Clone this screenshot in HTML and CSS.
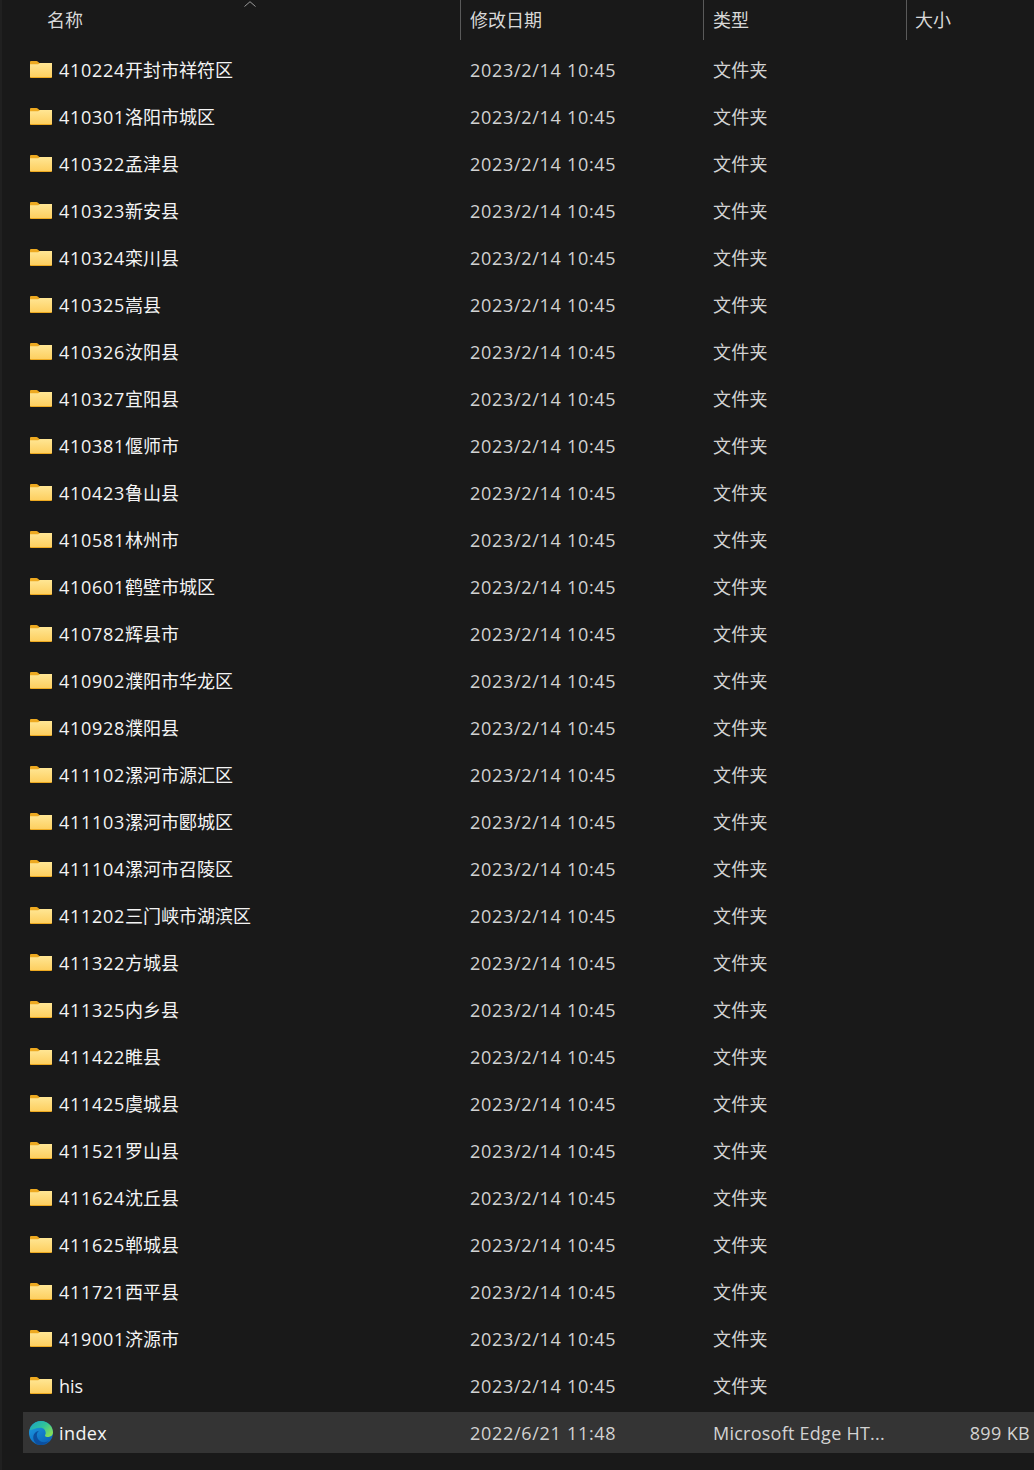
FILE: index.html
```html
<!DOCTYPE html>
<html lang="zh-CN">
<head>
  <meta charset="UTF-8">
  <title>文件列表</title>
  <link rel="stylesheet" href="styles.css">
</head>
<body>
  <svg class="defs" width="0" height="0">
    <defs>
      <linearGradient id="folder-body" x1="0" y1="0" x2="0" y2="1">
        <stop offset="0" stop-color="#ffe694"/>
        <stop offset="1" stop-color="#fdcf60"/>
      </linearGradient>
      <linearGradient id="edge-top" x1="0" y1="0" x2="1" y2="0.7">
        <stop offset="0" stop-color="#1a9fc9"/>
        <stop offset="0.55" stop-color="#2fc39a"/>
        <stop offset="1" stop-color="#86de58"/>
      </linearGradient>
      <linearGradient id="edge-low" x1="0" y1="0" x2="0.7" y2="1">
        <stop offset="0" stop-color="#1ea1e6"/>
        <stop offset="1" stop-color="#0c62b8"/>
      </linearGradient>
      <symbol id="folder" viewBox="0 0 22 17">
        <path d="M0 1.2C0 .5.500 0 1.200 0h5.300c.5 0 .9.200 1.200.5L9.400 2H21c.6 0 1 .4 1 1v13c0 .6-.4 1-1 1H1c-.6 0-1-.4-1-1z" fill="#eda920"/>
        <path d="M0 3.200h8.200L10 2h12V16H0z" fill="url(#folder-body)"/>
      </symbol>
    </defs>
  </svg>

  <div class="list">
    <div class="header">
      <span class="sort-caret"><svg width="12" height="6" viewBox="0 0 12 6"><path d="M.5 5.500 6 .7l5.500 4.800" fill="none" stroke="#9a9a9a"/></svg></span>
      <div class="head-cell head-name">名称</div>
      <div class="head-cell">修改日期</div>
      <div class="head-cell">类型</div>
      <div class="head-cell head-size">大小</div>
    </div>

    <div class="rows">
      <div class="row"><div class="name"><svg class="icon"><use href="#folder"/></svg><span class="code">410224</span>开封市祥符区</div><div class="date">2023/2/14 10:45</div><div class="type">文件夹</div><div class="size"></div></div>
      <div class="row"><div class="name"><svg class="icon"><use href="#folder"/></svg><span class="code">410301</span>洛阳市城区</div><div class="date">2023/2/14 10:45</div><div class="type">文件夹</div><div class="size"></div></div>
      <div class="row"><div class="name"><svg class="icon"><use href="#folder"/></svg><span class="code">410322</span>孟津县</div><div class="date">2023/2/14 10:45</div><div class="type">文件夹</div><div class="size"></div></div>
      <div class="row"><div class="name"><svg class="icon"><use href="#folder"/></svg><span class="code">410323</span>新安县</div><div class="date">2023/2/14 10:45</div><div class="type">文件夹</div><div class="size"></div></div>
      <div class="row"><div class="name"><svg class="icon"><use href="#folder"/></svg><span class="code">410324</span>栾川县</div><div class="date">2023/2/14 10:45</div><div class="type">文件夹</div><div class="size"></div></div>
      <div class="row"><div class="name"><svg class="icon"><use href="#folder"/></svg><span class="code">410325</span>嵩县</div><div class="date">2023/2/14 10:45</div><div class="type">文件夹</div><div class="size"></div></div>
      <div class="row"><div class="name"><svg class="icon"><use href="#folder"/></svg><span class="code">410326</span>汝阳县</div><div class="date">2023/2/14 10:45</div><div class="type">文件夹</div><div class="size"></div></div>
      <div class="row"><div class="name"><svg class="icon"><use href="#folder"/></svg><span class="code">410327</span>宜阳县</div><div class="date">2023/2/14 10:45</div><div class="type">文件夹</div><div class="size"></div></div>
      <div class="row"><div class="name"><svg class="icon"><use href="#folder"/></svg><span class="code">410381</span>偃师市</div><div class="date">2023/2/14 10:45</div><div class="type">文件夹</div><div class="size"></div></div>
      <div class="row"><div class="name"><svg class="icon"><use href="#folder"/></svg><span class="code">410423</span>鲁山县</div><div class="date">2023/2/14 10:45</div><div class="type">文件夹</div><div class="size"></div></div>
      <div class="row"><div class="name"><svg class="icon"><use href="#folder"/></svg><span class="code">410581</span>林州市</div><div class="date">2023/2/14 10:45</div><div class="type">文件夹</div><div class="size"></div></div>
      <div class="row"><div class="name"><svg class="icon"><use href="#folder"/></svg><span class="code">410601</span>鹤壁市城区</div><div class="date">2023/2/14 10:45</div><div class="type">文件夹</div><div class="size"></div></div>
      <div class="row"><div class="name"><svg class="icon"><use href="#folder"/></svg><span class="code">410782</span>辉县市</div><div class="date">2023/2/14 10:45</div><div class="type">文件夹</div><div class="size"></div></div>
      <div class="row"><div class="name"><svg class="icon"><use href="#folder"/></svg><span class="code">410902</span>濮阳市华龙区</div><div class="date">2023/2/14 10:45</div><div class="type">文件夹</div><div class="size"></div></div>
      <div class="row"><div class="name"><svg class="icon"><use href="#folder"/></svg><span class="code">410928</span>濮阳县</div><div class="date">2023/2/14 10:45</div><div class="type">文件夹</div><div class="size"></div></div>
      <div class="row"><div class="name"><svg class="icon"><use href="#folder"/></svg><span class="code">411102</span>漯河市源汇区</div><div class="date">2023/2/14 10:45</div><div class="type">文件夹</div><div class="size"></div></div>
      <div class="row"><div class="name"><svg class="icon"><use href="#folder"/></svg><span class="code">411103</span>漯河市郾城区</div><div class="date">2023/2/14 10:45</div><div class="type">文件夹</div><div class="size"></div></div>
      <div class="row"><div class="name"><svg class="icon"><use href="#folder"/></svg><span class="code">411104</span>漯河市召陵区</div><div class="date">2023/2/14 10:45</div><div class="type">文件夹</div><div class="size"></div></div>
      <div class="row"><div class="name"><svg class="icon"><use href="#folder"/></svg><span class="code">411202</span>三门峡市湖滨区</div><div class="date">2023/2/14 10:45</div><div class="type">文件夹</div><div class="size"></div></div>
      <div class="row"><div class="name"><svg class="icon"><use href="#folder"/></svg><span class="code">411322</span>方城县</div><div class="date">2023/2/14 10:45</div><div class="type">文件夹</div><div class="size"></div></div>
      <div class="row"><div class="name"><svg class="icon"><use href="#folder"/></svg><span class="code">411325</span>内乡县</div><div class="date">2023/2/14 10:45</div><div class="type">文件夹</div><div class="size"></div></div>
      <div class="row"><div class="name"><svg class="icon"><use href="#folder"/></svg><span class="code">411422</span>睢县</div><div class="date">2023/2/14 10:45</div><div class="type">文件夹</div><div class="size"></div></div>
      <div class="row"><div class="name"><svg class="icon"><use href="#folder"/></svg><span class="code">411425</span>虞城县</div><div class="date">2023/2/14 10:45</div><div class="type">文件夹</div><div class="size"></div></div>
      <div class="row"><div class="name"><svg class="icon"><use href="#folder"/></svg><span class="code">411521</span>罗山县</div><div class="date">2023/2/14 10:45</div><div class="type">文件夹</div><div class="size"></div></div>
      <div class="row"><div class="name"><svg class="icon"><use href="#folder"/></svg><span class="code">411624</span>沈丘县</div><div class="date">2023/2/14 10:45</div><div class="type">文件夹</div><div class="size"></div></div>
      <div class="row"><div class="name"><svg class="icon"><use href="#folder"/></svg><span class="code">411625</span>郸城县</div><div class="date">2023/2/14 10:45</div><div class="type">文件夹</div><div class="size"></div></div>
      <div class="row"><div class="name"><svg class="icon"><use href="#folder"/></svg><span class="code">411721</span>西平县</div><div class="date">2023/2/14 10:45</div><div class="type">文件夹</div><div class="size"></div></div>
      <div class="row"><div class="name"><svg class="icon"><use href="#folder"/></svg><span class="code">419001</span>济源市</div><div class="date">2023/2/14 10:45</div><div class="type">文件夹</div><div class="size"></div></div>
      <div class="row"><div class="name"><svg class="icon"><use href="#folder"/></svg><span class="latin">his</span></div><div class="date">2023/2/14 10:45</div><div class="type">文件夹</div><div class="size"></div></div>
      <div class="row selected">
        <div class="name">
          <svg class="icon-edge" viewBox="0 0 24 24">
            <circle cx="12" cy="12" r="12" fill="url(#edge-low)"/>
            <path d="M.4 9.500C1.800 4 6.400 0 12 0c6.600 0 12 5.200 12 11.600 0 2.600-2 4.400-4.600 4.400-2 0-3.400-.7-3.400-1.600 0-.6.700-.9.700-2.200C16.700 9 14.400 6.800 11.500 6.800 6.500 6.800 3 9 .4 9.500z" fill="url(#edge-top)"/>
            <path d="M7.800 14c0 4 3.200 7.200 7.400 7.200 1.900 0 3.600-.6 5-1.600-2.200 3-5 4.400-8.200 4.400-1.500 0-3-.3-4.300-.9C5.500 21 3 17.500 5 13.300c.7-1.500 2.800-3.300 5.300-3.600-1.500.8-2.500 2.400-2.500 4.300z" fill="#0b4f9f"/>
          </svg><span class="latin wide">index</span>
        </div>
        <div class="date">2022/6/21 11:48</div>
        <div class="type">Microsoft Edge HT...</div>
        <div class="size">899 KB</div>
      </div>
    </div>
  </div>
</body>
</html>
```

FILE: styles.css
```css
html, body {
  margin: 0;
  padding: 0;
}

body {
  background: #191919;
  color: #d6d6d6;
  font-family: "Open Sans", "Noto Sans CJK SC", sans-serif;
  font-size: 18px;
  height: 1470px;
  overflow: hidden;
  border-left: 2px solid #202020;
  box-sizing: border-box;
}

.defs {
  display: block;
  height: 0;
}

.list {
  width: 1032px;
}

.header {
  position: relative;
  display: grid;
  grid-template-columns: 458px 243px 203px 1fr;
  height: 40px;
}

.sort-caret {
  position: absolute;
  left: 242px;
  top: 0;
  line-height: 0;
}

.head-cell {
  display: flex;
  align-items: center;
  border-left: 1px solid #5a5a5a;
  padding: 0 0 2px 9px;
  color: #d8d8d8;
}

.head-name {
  border-left: none;
  padding-left: 45px;
}

.head-size {
  padding-left: 8px;
}

.rows {
  display: flex;
  flex-direction: column;
  gap: 7px;
  padding: 10px 0 0 21px;
}

.row {
  display: grid;
  grid-template-columns: 447px 243px 203px 1fr;
  align-items: center;
  height: 40px;
  white-space: nowrap;
}

.selected {
  background: #343434;
  height: 41px;
  margin-top: -1px;
  padding-top: 1px;
  box-sizing: border-box;
}

/* CJK glyphs sit a pixel lower than the digits, so lift the cell and put the digits back */
.name {
  display: flex;
  align-items: center;
  padding: 0 0 2px 7px;
  color: #f4f4f4;
}

.code, .latin {
  padding-top: 2px;
}

.code {
  letter-spacing: 0.7px;
}

.wide {
  letter-spacing: 0.4px;
}

.icon {
  width: 22px;
  height: 17px;
  margin-right: 7px;
  flex: none;
}

.icon-edge {
  width: 24px;
  height: 24px;
  margin: 2px 6px 0 -1px;
  flex: none;
}

.date, .type {
  color: #d2d2d2;
}

.date {
  letter-spacing: 0.7px;
}

.type {
  letter-spacing: 0.25px;
  padding-bottom: 2px;
}

.selected .type {
  padding-bottom: 0;
}

.size {
  text-align: right;
  padding-right: 4px;
  color: #d2d2d2;
  letter-spacing: 0.35px;
}
```
